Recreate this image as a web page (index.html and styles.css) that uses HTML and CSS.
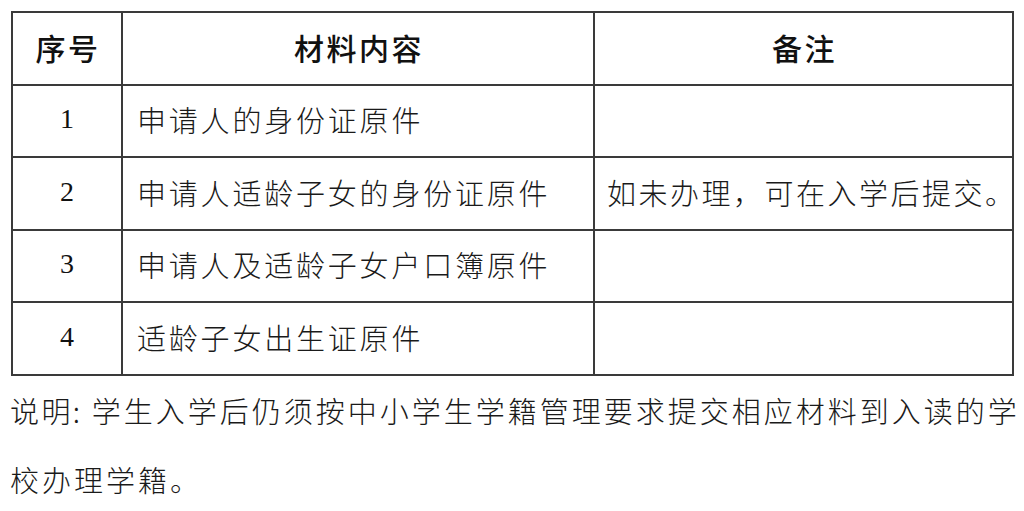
FILE: index.html
```html
<!DOCTYPE html>
<html lang="zh-CN">
<head>
<meta charset="utf-8">
<link rel="stylesheet" href="styles.css">
</head>
<body>
<div class="page">
  <table class="materials">
    <colgroup>
      <col class="c-no">
      <col class="c-item">
      <col class="c-note">
    </colgroup>
    <thead>
      <tr>
        <th>序号</th>
        <th>材料内容</th>
        <th>备注</th>
      </tr>
    </thead>
    <tbody>
      <tr>
        <td class="num">1</td>
        <td class="txt">申请人的身份证原件</td>
        <td class="txt"></td>
      </tr>
      <tr>
        <td class="num">2</td>
        <td class="txt">申请人适龄子女的身份证原件</td>
        <td class="txt remark">如未办理，可在入学后提交。</td>
      </tr>
      <tr>
        <td class="num">3</td>
        <td class="txt">申请人及适龄子女户口簿原件</td>
        <td class="txt"></td>
      </tr>
      <tr>
        <td class="num">4</td>
        <td class="txt">适龄子女出生证原件</td>
        <td class="txt"></td>
      </tr>
    </tbody>
  </table>
  <p class="note"><span class="lead">说明:</span> 学生入学后仍须按中小学生学籍管理要求提交相应材料到入读的学<br>校办理学籍。</p>
</div>
</body>
</html>
```
FILE: styles.css
```css
html, body {
  margin: 0;
  padding: 0;
  background: #ffffff;
}

body {
  font-family: "Noto Sans CJK SC", "Noto Sans", sans-serif;
  color: #1a1a1a;
}

.page {
  padding: 11px 0 0 11px;
  width: 1013px;
  box-sizing: border-box;
}

.materials {
  border-collapse: collapse;
  width: 1001px;
  table-layout: fixed;
}

.c-no { width: 110px; }
.c-item { width: 472px; }
.c-note { width: 419px; }

.materials th,
.materials td {
  border: 2px solid #3a3a3a;
  padding: 0 0 3px 0;
  height: 67.5px;
}

.materials th {
  font-size: 30px;
  font-weight: 500;
  letter-spacing: 2.5px;
  text-align: center;
  color: #111;
  padding-left: 2px;
}

.materials td.num {
  font-family: "Liberation Serif", "Times New Roman", serif;
  font-size: 28px;
  text-align: center;
  color: #111;
}

.materials td.txt {
  font-size: 29px;
  font-weight: 300;
  letter-spacing: 2.8px;
  padding-left: 14px;
  white-space: nowrap;
  color: #1a1a1a;
}

.materials td.remark {
  padding-left: 12px;
  letter-spacing: 2.5px;
}

.note {
  margin: 0 0 0 -1px;
  font-size: 29px;
  font-weight: 300;
  letter-spacing: 3px;
  line-height: 69px;
  white-space: nowrap;
  color: #1a1a1a;
}

.note .lead {
  letter-spacing: 2.4px;
}
```
